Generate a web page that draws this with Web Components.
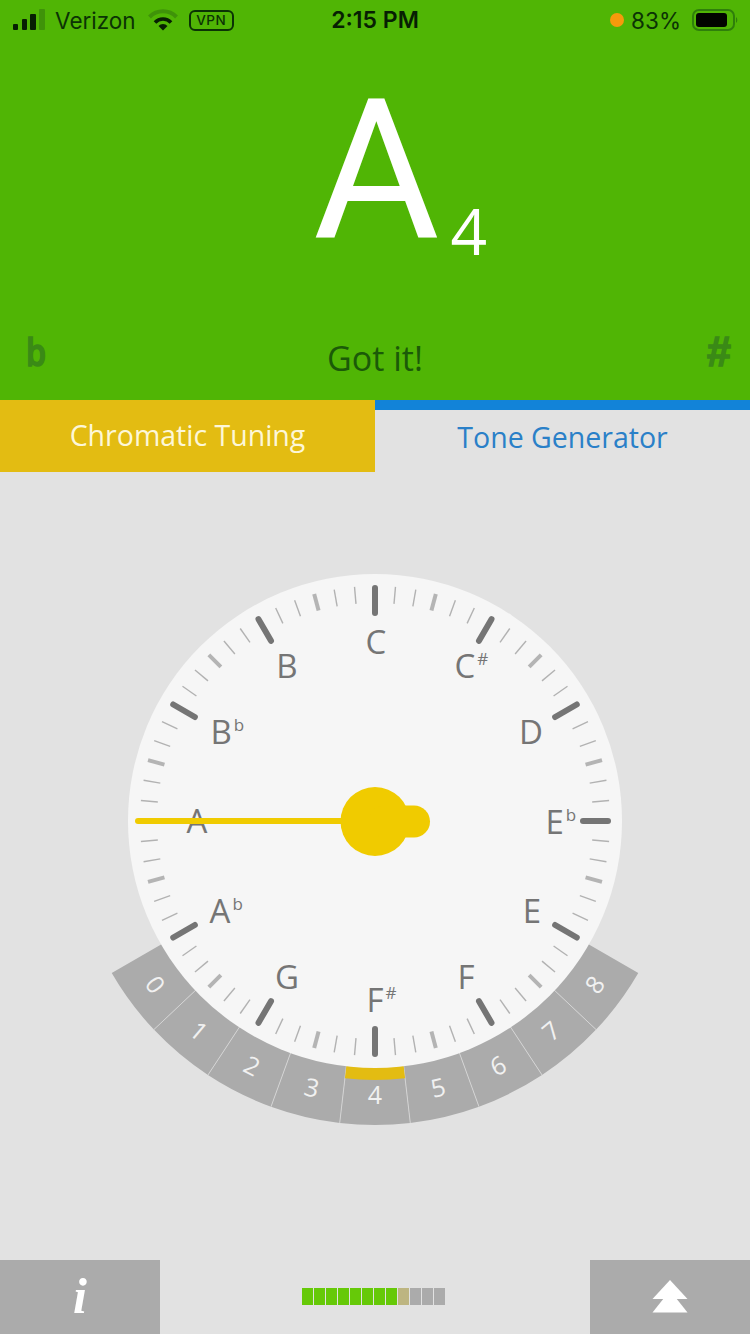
<!DOCTYPE html>
<html>
<head>
<meta charset="utf-8">
<title>Tuner</title>
<style>
  html, body { margin: 0; padding: 0; background: #e2e2e2; }
  body { font-family: "Open Sans", sans-serif; width: 750px; height: 1334px; overflow: hidden; }
  tuner-app { height: 1334px; }
</style>
</head>
<body>
<tuner-app>
  <note-header note="A" octave="4" message="Got it!">
    <status-bar></status-bar>
  </note-header>
  <mode-tabs></mode-tabs>
  <tuner-dial></tuner-dial>
  <bottom-bar></bottom-bar>
</tuner-app>

<script>
class TunerApp extends HTMLElement {
  constructor() {
    super();
    this.attachShadow({ mode: "open" }).innerHTML = `
      <style>
        :host { display: flex; flex-direction: column; width: 750px; }
      </style>
      <slot></slot>
    `;
  }
}

class StatusBar extends HTMLElement {
  constructor() {
    super();
    this.attachShadow({ mode: "open" }).innerHTML = `
      <style>
        :host {
          display: grid; grid-template-columns: 1fr auto 1fr; align-items: center;
          height: 40px; padding: 0 13px; box-sizing: border-box;
          font: 400 22.5px Inter, "Open Sans", sans-serif; color: #0b3305;
        }
        .left, .right { display: flex; align-items: center; }
        .right { justify-content: flex-end; }
        .carrier { margin-left: 9px; }
        .wifi { margin-left: 12px; }
        .vpn {
          margin-left: 11px; width: 45px; height: 21px; box-sizing: border-box;
          border: 2px solid #0b3305; border-radius: 6px;
          font-size: 13.5px; font-weight: 500; letter-spacing: 0.5px;
          display: flex; align-items: center; justify-content: center;
        }
        .time { font-weight: 600; font-size: 23px; color: #071f03; }
        .dot { width: 14px; height: 14px; border-radius: 50%; background: #f59a0c; }
        .pct { margin-left: 7px; }
        .battery { margin-left: 11px; margin-right: -1px; }
      </style>
      <div class="left">
        <svg width="33" height="22" viewBox="0 0 33 22">
          <rect x="0" y="15" width="5" height="6" rx="1" fill="#071f03"/>
          <rect x="9" y="10" width="5" height="11" rx="1" fill="#071f03"/>
          <rect x="17" y="5" width="6" height="16" rx="1" fill="#071f03"/>
          <rect x="26" y="0" width="6" height="21" rx="1" fill="#3f9309"/>
        </svg>
        <span class="carrier">Verizon</span>
        <svg class="wifi" width="30" height="22" viewBox="0 0 30 22" fill="none">
          <path d="M1.5 8 A19 19 0 0 1 28.5 8" stroke="#3f9309" stroke-width="4"/>
          <path d="M7 13.5 A11 11 0 0 1 23 13.5" stroke="#071f03" stroke-width="3.6"/>
          <path d="M10.5 17 L15 21.5 L19.5 17 A6 6 0 0 0 10.5 17 Z" fill="#071f03"/>
        </svg>
        <span class="vpn">VPN</span>
      </div>
      <div class="time">2:15 PM</div>
      <div class="right">
        <span class="dot"></span>
        <span class="pct">83%</span>
        <svg class="battery" width="46" height="22" viewBox="0 0 46 22">
          <rect x="1" y="1" width="41" height="20" rx="6" fill="none" stroke="#2f7f0b" stroke-width="2"/>
          <rect x="4" y="4" width="31" height="14" rx="3" fill="#020500"/>
          <path d="M44 8 A4 4 0 0 1 44 14 Z" fill="#2f7f0b"/>
        </svg>
      </div>
    `;
  }
}

class NoteHeader extends HTMLElement {
  constructor() {
    super();
    this.attachShadow({ mode: "open" });
  }

  connectedCallback() {
    const note = this.getAttribute("note");
    const octave = this.getAttribute("octave");
    const message = this.getAttribute("message");
    this.shadowRoot.innerHTML = `
      <style>
        :host {
          display: flex; flex-direction: column; height: 400px;
          background: #50b505; color: #fff; font-family: "Open Sans", sans-serif;
        }
        .note { height: 238px; display: flex; justify-content: center; align-items: flex-end; line-height: 1; }
        .letter { font: 400 194px/198px Roboto, sans-serif; height: 198px; margin-left: 50px; margin-bottom: 8px; }
        .octave { font-size: 64px; height: 64px; line-height: 64px; margin-left: 11px; margin-bottom: 15px; }
        .row { flex: 1; display: grid; grid-template-columns: 1fr auto 1fr; padding: 0 19px; align-items: end; }
        .msg { font-size: 34px; line-height: 40px; color: #1b5a08; margin-bottom: 22px; }
        .flat, .sharp { color: #3a8a16; line-height: 40px; margin-bottom: 29px; -webkit-text-stroke: 1.5px #3a8a16; }
        .flat { font-size: 38px; font-weight: 600; transform: scaleX(0.85); transform-origin: left; margin-left: 7px; }
        .sharp { font: 700 43px/40px "Liberation Sans", sans-serif; justify-self: end; }
      </style>
      <slot></slot>
      <div class="note"><span class="letter">${note}</span><span class="octave">${octave}</span></div>
      <div class="row">
        <span class="flat">b</span>
        <span class="msg">${message}</span>
        <span class="sharp">#</span>
      </div>
    `;
  }
}

class ModeTabs extends HTMLElement {
  constructor() {
    super();
    this.attachShadow({ mode: "open" }).innerHTML = `
      <style>
        :host {
          display: grid; grid-template-columns: 1fr 1fr; height: 72px;
          font: 400 28.5px "Open Sans", sans-serif;
        }
        div { display: flex; align-items: center; justify-content: center; box-sizing: border-box; }
        .active { background: #e3bc12; color: #fdf7d8; padding-bottom: 2px; }
        .other { background: #e2e2e2; color: #2a80c8; border-top: 10px solid #1283d8; padding-bottom: 9px; }
      </style>
      <div class="active">Chromatic Tuning</div>
      <div class="other">Tone Generator</div>
    `;
  }
}

class TunerDial extends HTMLElement {
  constructor() {
    super();
    this.attachShadow({ mode: "open" });
  }

  // point on a circle around the dial centre, degrees clockwise from 12 o'clock
  static pt(r, deg) {
    const a = deg * Math.PI / 180;
    return [(280 + r * Math.sin(a)).toFixed(2), (261 - r * Math.cos(a)).toFixed(2)];
  }

  static ticks() {
    let out = "";
    for (let d = 0; d < 360; d += 5) {
      let inner = 218, outer = 235, w = 1.4, col = "#b2b2b2", cap = "butt";
      if (d % 30 === 0) { inner = 208; outer = 233; w = 6; col = "#757575"; cap = "round"; }
      else if (d % 15 === 0) { w = 4; col = "#b4b4b4"; }
      const [x1, y1] = TunerDial.pt(inner, d);
      const [x2, y2] = TunerDial.pt(outer, d);
      out += `<line x1="${x1}" y1="${y1}" x2="${x2}" y2="${y2}" stroke="${col}" stroke-width="${w}" stroke-linecap="${cap}"/>`;
    }
    return out;
  }

  static labels() {
    // [text, accidental, x, y] centre of main letter, in page pixels
    const items = [
      ["C", "", 376, 642], ["C", "#", 465, 666], ["D", "", 531, 732], ["E", "b", 556, 822],
      ["E", "", 532, 911], ["F", "", 466, 977], ["F", "#", 377, 1000], ["G", "", 287, 977],
      ["A", "b", 220, 911], ["A", "", 197, 821], ["B", "b", 221, 732], ["B", "", 287, 666],
    ];
    return items.map(([t, acc, x, y]) => {
      const sx = x - 95, sy = y - 560 + 12;
      if (!acc) return `<text x="${sx}" y="${sy}" text-anchor="middle">${t}</text>`;
      return `<text x="${sx - 10.5}" y="${sy}">${t}<tspan dy="-13" dx="2" font-size="17">${acc}</tspan></text>`;
    }).join("");
  }

  static octaves() {
    const step = 120 / 9;
    let out = "";
    for (let i = 0; i < 9; i++) {
      const a0 = 180 + 60 - i * step, a1 = a0 - step;
      const [x1, y1] = TunerDial.pt(304, a0), [x2, y2] = TunerDial.pt(304, a1);
      const [x3, y3] = TunerDial.pt(240, a1), [x4, y4] = TunerDial.pt(240, a0);
      out += `<path d="M${x1} ${y1} A304 304 0 0 0 ${x2} ${y2} L${x3} ${y3} A240 240 0 0 1 ${x4} ${y4} Z" fill="#ababab"/>`;
      if (i > 0) out += `<line x1="${x4}" y1="${y4}" x2="${x1}" y2="${y1}" stroke="#d4d4d4" stroke-width="1"/>`;
      const mid = a0 - step / 2;
      const [tx, ty] = TunerDial.pt(274, mid);
      out += `<text transform="translate(${tx} ${ty}) rotate(${mid - 180})" y="9" text-anchor="middle" class="digit">${i}</text>`;
    }
    const s = step / 2;
    const [x1, y1] = TunerDial.pt(259, 180 + s), [x2, y2] = TunerDial.pt(259, 180 - s);
    const [x3, y3] = TunerDial.pt(240, 180 - s), [x4, y4] = TunerDial.pt(240, 180 + s);
    out += `<path d="M${x1} ${y1} A259 259 0 0 0 ${x2} ${y2} L${x3} ${y3} L${x4} ${y4} Z" fill="#e3bc12"/>`;
    return out;
  }

  connectedCallback() {
    this.shadowRoot.innerHTML = `
      <style>
        :host { display: block; flex: 1; padding-top: 88px; }
        svg { display: block; margin: 0 auto; }
        .labels { font: 400 33px "Open Sans", sans-serif; fill: #757575; }
        .digit { font: 400 25px "Open Sans", sans-serif; fill: #f1f1f1; }
      </style>
      <svg width="560" height="580" viewBox="0 0 560 580">
        ${TunerDial.octaves()}
        <circle cx="280" cy="261" r="247" fill="#f6f6f6"/>
        ${TunerDial.ticks()}
        <g class="labels">${TunerDial.labels()}</g>
        <line x1="43" y1="261" x2="260" y2="261" stroke="#f0cb00" stroke-width="6" stroke-linecap="round"/>
        <circle cx="280" cy="261.5" r="34.5" fill="#f0cb00"/>
        <line x1="290" y1="261.5" x2="319" y2="261.5" stroke="#f0cb00" stroke-width="32" stroke-linecap="round"/>
      </svg>
    `;
  }
}

class BottomBar extends HTMLElement {
  constructor() {
    super();
    const cells = Array.from({ length: 12 }, (_, i) =>
      `<span class="${i < 8 ? "on" : i === 8 ? "warm" : ""}"></span>`).join("");
    this.attachShadow({ mode: "open" }).innerHTML = `
      <style>
        :host { display: flex; justify-content: space-between; align-items: stretch; height: 74px; }
        .btn {
          width: 160px; background: #ababab; color: #fff;
          display: flex; align-items: center; justify-content: center;
        }
        .info { font: italic 700 50px "Liberation Serif", serif; line-height: 74px; padding-bottom: 2px; box-sizing: border-box; }
        .meter { display: grid; grid-template-columns: repeat(12, 10.5px); column-gap: 1.5px; height: 17px; margin: 28px 0 0 -3px; }
        .meter span { background: #ababab; }
        .meter .on { background: #66c908; }
        .meter .warm { background: #bdb581; }
        .up { margin-bottom: 2px; }
      </style>
      <div class="btn info">i</div>
      <div class="meter">${cells}</div>
      <div class="btn">
        <svg class="up" width="36" height="33" viewBox="0 0 36 33">
          <polygon points="18,0 35.5,19 0.5,19" fill="#fff"/>
          <polygon points="12,18 24,18 35.5,32.5 0.5,32.5" fill="#fff"/>
        </svg>
      </div>
    `;
  }
}

customElements.define("tuner-app", TunerApp);
customElements.define("status-bar", StatusBar);
customElements.define("note-header", NoteHeader);
customElements.define("mode-tabs", ModeTabs);
customElements.define("tuner-dial", TunerDial);
customElements.define("bottom-bar", BottomBar);
</script>
</body>
</html>
